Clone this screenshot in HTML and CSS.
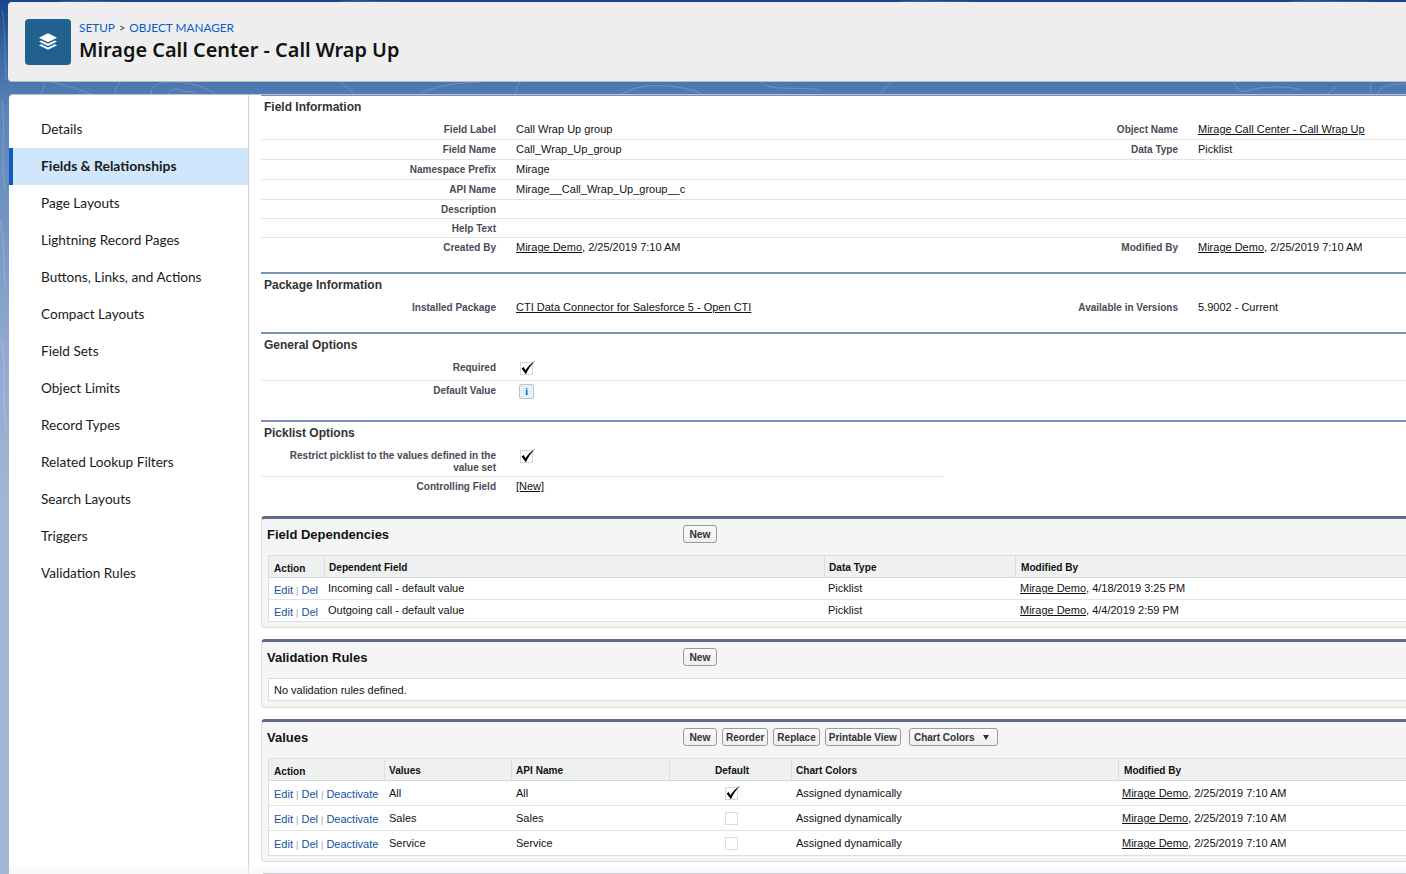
FILE: index.html
```html
<!DOCTYPE html>
<html lang="en">
<head>
<meta charset="utf-8">
<title>Mirage Call Center - Call Wrap Up</title>
<link rel="stylesheet" href="styles.css">
</head>
<body>
<svg class="bg-art" width="1406" height="874" viewBox="0 0 1406 874" fill="none" aria-hidden="true">
  <g stroke="#ffffff" stroke-opacity=".18" stroke-width="1">
    <path d="M40 95c6-8 2-12 8-14M50 82c14 2 30 8 44 13M120 82c-4 6-6 9-4 13"/>
    <path d="M152 95c-4-10 10-14 24-13 14 1 30 4 40 13M168 95c4-6 8-8 14-4 6 2 10-2 16 4"/>
    <path d="M340 82c4 4 10 6 14 13M420 95c10-8 30-12 60-13M520 82c-4 4-2 9-6 13"/>
    <path d="M620 95c14-8 30-12 56-8 14 2 20 4 28 8M760 82c10 10 40 4 60 8M880 95c4-6 8-10 12-13"/>
    <path d="M1234 82c4 8 8 12 16 8 14-4 40-4 52 0M1326 95c4-2 6-6 10-8M1372 95c-2-6-2-10 0-13M1378 95c0-8 12-12 28-11"/>
    <path d="M2 10c4 20 2 40 4 70M2 100c4 30-2 60 3 90M0 220c6 24 2 50 6 70M2 340c4 30 0 60 4 90"/>
    <path d="M60 2c20-2 40 0 60 0M340 2c20-2 30 0 60 0M900 2c20-2 40 0 70 0M1290 2c20-2 40 0 80 0"/>
  </g>
</svg>

<header class="page-head">
  <div class="obj-icon">
    <svg width="22" height="22" viewBox="0 0 22 22" fill="#fff" aria-hidden="true">
      <path d="M11 2.2 20 6.7 11 11.2 2 6.7Z"/>
      <path d="M4.2 9.4 11 12.8 17.8 9.4 20 10.5 11 15 2 10.5Z"/>
      <path d="M4.2 13.2 11 16.6 17.8 13.2 20 14.3 11 18.8 2 14.3Z"/>
    </svg>
  </div>
  <div class="head-text">
    <div class="crumbs"><a href="#">SETUP</a><span class="crumb-sep">&gt;</span><a href="#">OBJECT MANAGER</a></div>
    <h1>Mirage Call Center - Call Wrap Up</h1>
  </div>
</header>

<div class="main">
  <nav class="side">
    <a href="#">Details</a>
    <a href="#" class="active">Fields &amp; Relationships</a>
    <a href="#">Page Layouts</a>
    <a href="#">Lightning Record Pages</a>
    <a href="#">Buttons, Links, and Actions</a>
    <a href="#">Compact Layouts</a>
    <a href="#">Field Sets</a>
    <a href="#">Object Limits</a>
    <a href="#">Record Types</a>
    <a href="#">Related Lookup Filters</a>
    <a href="#">Search Layouts</a>
    <a href="#">Triggers</a>
    <a href="#">Validation Rules</a>
  </nav>

  <section class="content">
    <div class="detail first">
      <h3>Field Information</h3>
      <div class="drow line"><span class="lab">Field Label</span><span class="val">Call Wrap Up group</span><span class="lab">Object Name</span><span class="val"><a href="#">Mirage Call Center - Call Wrap Up</a></span></div>
      <div class="drow line"><span class="lab">Field Name</span><span class="val">Call_Wrap_Up_group</span><span class="lab">Data Type</span><span class="val">Picklist</span></div>
      <div class="drow line"><span class="lab">Namespace Prefix</span><span class="val">Mirage</span><span></span><span></span></div>
      <div class="drow line"><span class="lab">API Name</span><span class="val">Mirage__Call_Wrap_Up_group__c</span><span></span><span></span></div>
      <div class="drow line short"><span class="lab">Description</span><span class="val"></span><span></span><span></span></div>
      <div class="drow line short"><span class="lab">Help Text</span><span class="val"></span><span></span><span></span></div>
      <div class="drow"><span class="lab">Created By</span><span class="val"><a href="#">Mirage Demo</a>, 2/25/2019 7:10 AM</span><span class="lab">Modified By</span><span class="val"><a href="#">Mirage Demo</a>, 2/25/2019 7:10 AM</span></div>
    </div>

    <div class="detail pkg">
      <h3>Package Information</h3>
      <div class="drow"><span class="lab">Installed Package</span><span class="val"><a href="#">CTI Data Connector for Salesforce 5 - Open CTI</a></span><span class="lab">Available in Versions</span><span class="val">5.9002 - Current</span></div>
    </div>

    <div class="detail gen">
      <h3>General Options</h3>
      <div class="drow line tall"><span class="lab">Required</span><span class="val"><svg class="chk" width="16" height="16" viewBox="0 0 16 16" fill="none" aria-hidden="true"><rect x="1.5" y="2.5" width="12" height="12" stroke="#aaa" stroke-dasharray="1 1"/><path d="M2.6 8.4 4.8 7.1 6.4 10.2C8.6 6.6 12 3.2 16.4 .4 12 4.8 9 9.2 6.9 14.2Z" fill="#000"/></svg></span><span></span><span></span></div>
      <div class="drow"><span class="lab">Default Value</span><span class="val"><button class="info" type="button">i</button></span><span></span><span></span></div>
    </div>

    <div class="detail pick">
      <h3>Picklist Options</h3>
      <div class="prow line two"><span class="lab">Restrict picklist to the values defined in the value set</span><span class="val"><svg class="chk" width="16" height="16" viewBox="0 0 16 16" fill="none" aria-hidden="true"><rect x="1.5" y="2.5" width="12" height="12" stroke="#aaa" stroke-dasharray="1 1"/><path d="M2.6 8.4 4.8 7.1 6.4 10.2C8.6 6.6 12 3.2 16.4 .4 12 4.8 9 9.2 6.9 14.2Z" fill="#000"/></svg></span></div>
      <div class="prow"><span class="lab">Controlling Field</span><span class="val"><a href="#">[New]</a></span></div>
    </div>

    <div class="box deps">
      <div class="box-head"><h2>Field Dependencies</h2><div class="btns"><button type="button">New</button></div></div>
      <div class="tbl">
        <div class="tr th dep"><span class="action-h">Action</span><span>Dependent Field</span><span>Data Type</span><span>Modified By</span></div>
        <div class="tr dep"><span class="acts"><a href="#">Edit</a> <i>|</i> <a href="#">Del</a></span><span>Incoming call - default value</span><span>Picklist</span><span><a href="#" class="u">Mirage Demo</a>, 4/18/2019 3:25 PM</span></div>
        <div class="tr dep"><span class="acts"><a href="#">Edit</a> <i>|</i> <a href="#">Del</a></span><span>Outgoing call - default value</span><span>Picklist</span><span><a href="#" class="u">Mirage Demo</a>, 4/4/2019 2:59 PM</span></div>
      </div>
    </div>

    <div class="box rules">
      <div class="box-head"><h2>Validation Rules</h2><div class="btns"><button type="button">New</button></div></div>
      <div class="tbl empty">No validation rules defined.</div>
    </div>

    <div class="box values">
      <div class="box-head"><h2>Values</h2><div class="btns"><button type="button">New</button><button type="button">Reorder</button><button type="button">Replace</button><button type="button">Printable View</button><button type="button" class="menu">Chart Colors <b class="caret"></b></button></div></div>
      <div class="tbl">
        <div class="tr th val-row"><span class="action-h">Action</span><span>Values</span><span>API Name</span><span class="center">Default</span><span>Chart Colors</span><span>Modified By</span></div>
        <div class="tr val-row"><span class="acts"><a href="#">Edit</a> <i>|</i> <a href="#">Del</a> <i>|</i> <a href="#">Deactivate</a></span><span>All</span><span>All</span><span class="center"><svg class="chk" width="16" height="16" viewBox="0 0 16 16" fill="none" aria-hidden="true"><rect x="1.5" y="2.5" width="12" height="12" stroke="#aaa" stroke-dasharray="1 1"/><path d="M2.6 8.4 4.8 7.1 6.4 10.2C8.6 6.6 12 3.2 16.4 .4 12 4.8 9 9.2 6.9 14.2Z" fill="#000"/></svg></span><span>Assigned dynamically</span><span><a href="#" class="u">Mirage Demo</a>, 2/25/2019 7:10 AM</span></div>
        <div class="tr val-row"><span class="acts"><a href="#">Edit</a> <i>|</i> <a href="#">Del</a> <i>|</i> <a href="#">Deactivate</a></span><span>Sales</span><span>Sales</span><span class="center"><svg class="chk" width="16" height="16" viewBox="0 0 16 16" fill="none" aria-hidden="true"><rect x="1.5" y="2.5" width="12" height="12" stroke="#bbb" stroke-dasharray="1 1"/></svg></span><span>Assigned dynamically</span><span><a href="#" class="u">Mirage Demo</a>, 2/25/2019 7:10 AM</span></div>
        <div class="tr val-row"><span class="acts"><a href="#">Edit</a> <i>|</i> <a href="#">Del</a> <i>|</i> <a href="#">Deactivate</a></span><span>Service</span><span>Service</span><span class="center"><svg class="chk" width="16" height="16" viewBox="0 0 16 16" fill="none" aria-hidden="true"><rect x="1.5" y="2.5" width="12" height="12" stroke="#bbb" stroke-dasharray="1 1"/></svg></span><span>Assigned dynamically</span><span><a href="#" class="u">Mirage Demo</a>, 2/25/2019 7:10 AM</span></div>
      </div>
    </div>

    <div class="box next"></div>
  </section>
</div>
</body>
</html>
```
FILE: styles.css
```css
* { box-sizing: border-box; }
html, body { height: 874px; overflow: hidden; }
body {
  margin: 0;
  position: relative;
  padding: 2px 0 0 8px;
  background: linear-gradient(180deg, #174585 0, #3e6ca6 60px, #5a84b8 110px, #8fa8cf 340px, #a3b8d8 520px, #a3b8d8 100%);
  font-family: "Liberation Sans", Arial, sans-serif;
  font-size: 11px;
  color: #111;
}
.bg-art { position: absolute; left: 0; top: 0; }
a { color: inherit; }

.page-head {
  position: relative;
  height: 80px;
  margin-right: -8px;
  padding-left: 17px;
  display: flex;
  align-items: center;
  gap: 8px;
  background: #eeeeee;
  border-radius: 4px 0 0 4px;
  border-bottom: 1px solid #b9bdc4;
}
.obj-icon {
  width: 46px;
  height: 46px;
  border-radius: 4px;
  background: #22618f;
  display: flex;
  align-items: center;
  justify-content: center;
}
.head-text { margin-top: 1px; }
.crumbs {
  font-family: "Lato", "Noto Sans", sans-serif;
  font-size: 11.8px;
  line-height: 16px;
  color: #333;
}
.crumbs a { color: #0b5cc4; text-decoration: none; }
.crumb-sep { margin: 0 4px; font-size: 11px; color: #444; }
h1 {
  margin: 0;
  font-family: "Noto Sans", sans-serif;
  font-size: 19.9px;
  font-weight: 600;
  line-height: 28px;
  color: #111;
}

.main {
  position: relative;
  display: flex;
  height: 779px;
  margin-top: 13px;
  margin-left: 1px;
  background: #fff;
  border-radius: 4px 0 0 0;
  box-shadow: 0 -1px 0 #bcc3cf;
  overflow: hidden;
}
.main::after {
  content: "";
  position: absolute;
  left: 0;
  right: 0;
  bottom: 0;
  height: 12px;
  background: linear-gradient(180deg, rgba(245,245,245,0), rgba(245,245,245,.7));
  pointer-events: none;
}
.side {
  flex: 0 0 240px;
  padding-top: 16px;
  border-right: 1px solid #d4d4d4;
  font-family: "Lato", "Noto Sans", sans-serif;
  font-size: 13.6px;
}
.side a {
  display: flex;
  align-items: center;
  height: 37px;
  padding: 0 0 2px 32px;
  color: #1a1a1a;
  text-decoration: none;
}
.side a.active {
  padding-left: 28px;
  border-left: 4px solid #0b5cc4;
  background: #cfe6fd;
  font-weight: 700;
  font-size: 13.9px;
}

.content {
  flex: 1;
  min-width: 0;
  padding-left: 12px;
  overflow: hidden;
}
.detail { border-top: 2px solid #7a8fb6; }
.detail.first { border-top-width: 1px; height: 177px; }
.detail.pkg { height: 60px; }
.detail.gen { height: 88px; }
.detail.pick { height: 96px; }
.detail h3 {
  margin: 0;
  height: 23px;
  padding: 3px 0 0 3px;
  font-size: 12px;
  line-height: 16px;
  font-weight: 700;
  color: #333;
}
.detail.first h3 { height: 24px; padding-top: 3px; }
.pkg .drow { padding-top: 1px; }
.drow, .prow {
  display: grid;
  align-items: start;
  min-height: 20px;
}
.drow { grid-template-columns: 235px 502px 180px 240px; }
.prow { grid-template-columns: 235px 447px; width: 682px; }
.line { border-bottom: 1px solid #e3e3e3; }
.short { min-height: 19px; }
.tall { height: 24px; }
.two { height: 32px; }
.lab {
  padding-top: 4px;
  line-height: 12px;
  text-align: right;
  font-size: 10px;
  font-weight: 700;
  color: #4a4a56;
}
.tall .lab { padding-top: 5px; }
.two .lab { padding: 4.5px 0 0 20px; }
.val {
  padding: 2px 0 0 20px;
  line-height: 14px;
  font-size: 11px;
  color: #111;
}
.chk { display: block; margin-top: 1px; margin-left: 3px; overflow: visible; }
.info {
  display: block;
  width: 15px;
  height: 15px;
  margin: 1px 0 0 3px;
  padding: 0;
  border: 1px solid #b9c4d6;
  border-radius: 2px;
  background: #e6effa;
  font-family: "Liberation Serif", serif;
  font-size: 11px;
  font-weight: 700;
  line-height: 13px;
  color: #1467c8;
}

.box {
  margin-right: -20px;
  background: #f5f5f5;
  border: 1px solid #dfdfdf;
  border-top: 3px solid #5f6b8a;
  border-radius: 4px 0 0 4px;
}
.box.deps { height: 112px; }
.box.rules { height: 69px; margin-top: 11px; }
.box.values { height: 143px; margin-top: 11px; }
.box.next { height: 40px; margin-top: 11px; border-top-width: 1px; border-top-color: #5f6b8a; background: #fff; }
.box-head {
  display: flex;
  align-items: flex-start;
  height: 36px;
  padding: 6px 0 0 5px;
}
.box-head h2 {
  flex: 0 0 416px;
  margin: 0;
  padding-top: 2px;
  font-size: 13px;
  line-height: 16px;
  font-weight: 700;
  color: #111;
}
.btns { display: flex; gap: 5px; }
.btns button {
  height: 18px;
  padding: 0 3px;
  border: 1px solid #9b9b9b;
  border-radius: 3px;
  background: linear-gradient(#fafafa, #efefef);
  font-family: inherit;
  font-size: 10px;
  font-weight: 700;
  line-height: 15px;
  color: #333;
}
.btns button:first-child { width: 34px; padding: 0; font-size: 10.3px; }
.btns .menu { width: 89px; margin-left: 3px; padding: 0 0 0 4px; text-align: left; }
.caret {
  display: inline-block;
  margin-left: 6px;
  border-left: 3.5px solid transparent;
  border-right: 3.5px solid transparent;
  border-top: 5px solid #333;
  vertical-align: 1px;
}
.tbl {
  margin-left: 6px;
  background: #fff;
  border: 1px solid #dedede;
}
.tr {
  display: grid;
  border-bottom: 1px solid #e3e3e3;
  line-height: 14px;
  font-size: 11px;
}
.tr:last-child { border-bottom: 0; }
.tr.dep { grid-template-columns: 55px 500px 191px 400px; height: 22px; }
.tr.dep:last-child { height: 21px; }
.tr.val-row { grid-template-columns: 115px 127px 158px 122px 327px 300px; height: 25px; }
.tr.val-row:last-child { height: 24px; }
.tr > span { padding: 3px 0 0 4px; }
.tr.dep > span:last-child { padding-left: 5px; }
.tr.val-row > span { padding: 5px 0 0 5px; }
.tr.val-row > span:last-child { padding-left: 4px; }
.tr .acts { padding: 5px 0 0 5px; white-space: nowrap; }
.tr.val-row > .acts { padding: 6px 0 0 5px; }
.acts a { color: #15509d; text-decoration: none; }
.acts i { font-style: normal; color: #9aa3ad; font-size: 9px; }
.u { color: #111; }
.tr.th {
  height: 22px;
  background: #eff1f0;
  border-bottom: 1px solid #d6d8d8;
  font-size: 10.1px;
  font-weight: 700;
  color: #111;
}
.tr.th > span { padding: 5px 0 0 4px; border-left: 1px solid #dcdede; }
.tr.th > span:last-child { padding-left: 5px; }
.tr.th > .action-h { padding: 6px 0 0 5px; border-left: 0; }
.tr.val-row > .center { padding-left: 3px; text-align: center; }
.center .chk { margin: 0 auto; }
.tr.val-row > .center:has(.chk) { padding-top: 4px; }
.empty {
  height: 23px;
  padding: 4px 0 0 5px;
  line-height: 14px;
  font-size: 11px;
}
```
